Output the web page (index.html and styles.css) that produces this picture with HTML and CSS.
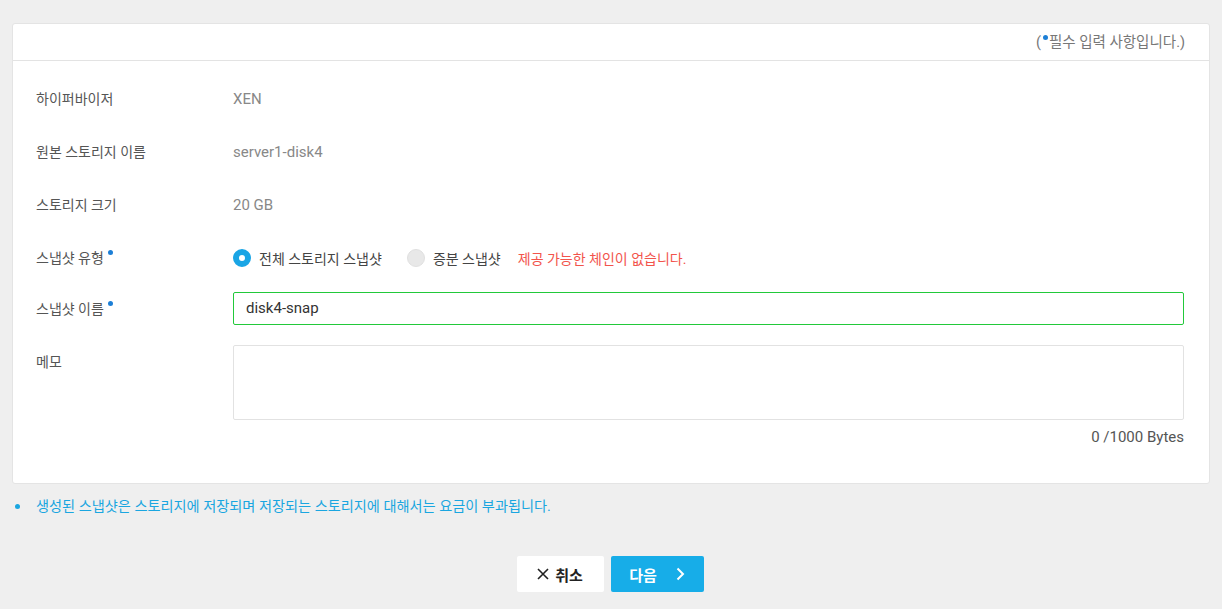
FILE: index.html
```html
<!DOCTYPE html>
<html lang="ko">
<head>
<meta charset="utf-8">
<link rel="stylesheet" href="styles.css">
</head>
<body>
<div class="card">
  <div class="card-head"><span class="req-note">(<i class="dot"></i>필수 입력 사항입니다.)</span></div>
  <div class="card-body">
    <div class="row"><div class="label">하이퍼바이저</div><div class="value">XEN</div></div>
    <div class="row"><div class="label">원본 스토리지 이름</div><div class="value">server1-disk4</div></div>
    <div class="row"><div class="label">스토리지 크기</div><div class="value">20 GB</div></div>
    <div class="row"><div class="label">스냅샷 유형<i class="dot sup"></i></div>
      <div class="radios">
        <label class="radio"><span class="rb on"></span><span class="rt">전체 스토리지 스냅샷</span></label>
        <label class="radio disabled"><span class="rb off"></span><span class="rt">증분 스냅샷</span></label>
        <span class="err">제공 가능한 체인이 없습니다.</span>
      </div>
    </div>
    <div class="row row-input"><div class="label">스냅샷 이름<i class="dot sup"></i></div>
      <div class="field"><div class="input">disk4-snap</div></div>
    </div>
    <div class="row row-memo"><div class="label">메모</div>
      <div class="field"><div class="textarea"></div><div class="count">0 /1000 Bytes</div></div>
    </div>
  </div>
</div>
<ul class="notes"><li>생성된 스냅샷은 스토리지에 저장되며 저장되는 스토리지에 대해서는 요금이 부과됩니다.</li></ul>
<div class="actions">
  <button class="btn cancel"><svg width="12" height="12" viewBox="0 0 12 12"><path d="M1 1L11 11M11 1L1 11" stroke="#222" stroke-width="1.6" fill="none"/></svg>취소</button>
  <button class="btn next">다음<svg width="10" height="14" viewBox="0 0 10 14"><path d="M2.5 1.5L8 7L2.5 12.5" stroke="#fff" stroke-width="2" fill="none"/></svg></button>
</div>
</body>
</html>
```
FILE: styles.css
```css
* { box-sizing: border-box; }
html, body { margin: 0; }
body {
  background: #efefef;
  padding: 23px 12px 0;
  font-family: Roboto, "Noto Sans CJK KR", sans-serif;
  font-size: 14px;
  color: #555;
  height: 609px;
}
.card {
  background: #fff;
  border: 1px solid #e4e4e4;
  border-radius: 3px;
}
.card-head {
  height: 37px;
  border-bottom: 1px solid #e3e3e3;
  display: flex;
  align-items: center;
  justify-content: flex-end;
  padding: 0 24px 4px 0;
  color: #777;
  font-size: 14.5px;
}
.dot {
  display: inline-block;
  width: 5px;
  height: 5px;
  border-radius: 50%;
  background: #1c7fd6;
  vertical-align: 7px;
  margin: 0 1px 0 2px;
}
.dot.sup { margin-left: 4px; vertical-align: 8px; }
.card-body { padding: 11px 25px 36px 23px; }
.row {
  display: flex;
  align-items: center;
  height: 53px;
}
.label {
  width: 197px;
  flex: none;
  color: #555;
  line-height: 20px;
}
.value { color: #888; line-height: 20px; font-size: 15px; }
.radios { display: flex; align-items: center; color: #444; }
.radio { display: flex; align-items: center; margin-right: 25px; }
.radio.disabled { margin-right: 17px; }
.rb {
  width: 18px; height: 18px; border-radius: 50%; flex: none;
  margin-right: 8px;
}
.rb.on { border: 6px solid #1aa5e5; background: #fff; }
.rb.off { background: #e8e8e8; border: 1px solid #e0e0e0; }
.rt { color: #444; }
.err { color: #f2544c; }
.row-input { height: 33px; margin-top: 8px; }
.field { flex: 1; }
.input {
  height: 33px;
  border: 1px solid #22c93a;
  border-radius: 2px;
  padding: 0 12px;
  line-height: 31px;
  font-size: 15px;
  color: #333;
}
.row-memo { height: auto; align-items: flex-start; margin-top: 20px; }
.row-memo .label { padding-top: 7px; }
.textarea {
  height: 75px;
  border: 1px solid #e2e2e2;
  border-radius: 2px;
}
.count {
  text-align: right;
  margin-top: 7px;
  line-height: 20px;
  color: #555;
  font-size: 15px;
}
.notes {
  list-style: none;
  margin: 12px 0 0;
  padding: 0 0 0 24px;
  color: #1aa6e0;
  line-height: 20px;
  font-size: 14.2px;
}
.notes li { position: relative; }
.notes li::before {
  content: "";
  position: absolute;
  left: -21px; top: 8px;
  width: 5px; height: 5px; border-radius: 50%;
  background: #1aa6e0;
}
.actions {
  display: flex;
  justify-content: center;
  gap: 7px;
  margin-top: 40px;
  padding-right: 2px;
}
.btn {
  height: 36px;
  border: none;
  border-radius: 2px;
  font-family: Roboto, "Noto Sans CJK KR", sans-serif;
  font-size: 15px;
  font-weight: 700;
  display: flex;
  align-items: center;
  justify-content: center;
}
.cancel { width: 87px; background: #fff; color: #222; gap: 6px; }
.next { width: 93px; background: #17ade8; color: #fff; gap: 18px; padding-left: 6px; }
```
